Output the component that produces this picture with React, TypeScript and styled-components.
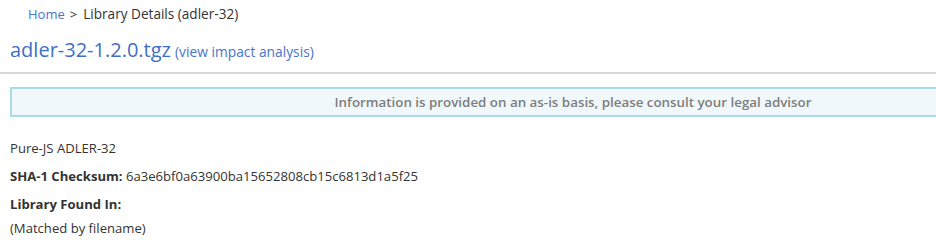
import React from "react";
import styled, { createGlobalStyle } from "styled-components";

const Global = createGlobalStyle`
  html, body { margin: 0; padding: 0; background: #fff; overflow: hidden; }
  body { font-family: "Open Sans", "Liberation Sans", sans-serif; color: #333; font-size: 13px; }
`;

const Page = styled.div`
  width: 936px;
  overflow: hidden;
`;

const Breadcrumb = styled.nav`
  padding: 5px 0 0 28px;
  height: 22px;
  line-height: 18px;
  font-size: 13px;
  color: #333;
`;

const Crumb = styled.a`
  color: #4a74c9;
  text-decoration: none;
`;

const Sep = styled.span`
  margin: 0 6px 0 5px;
`;

const Current = styled.span`
  font-size: 13.6px;
`;

const Header = styled.div`
  padding: 10px 10px 0;
  height: 47px;
  box-sizing: border-box;
  border-bottom: 2px solid #d6d6d6;
`;

const Title = styled.h1`
  margin: 0;
  font-size: 20px;
  font-weight: 400;
  line-height: 26px;
  color: #3f6fc6;
`;

const SubLink = styled.a`
  font-size: 13.8px;
  color: #4a74c9;
  text-decoration: none;
  margin-left: 4px;
`;

const Notice = styled.div`
  margin: 13px 0 0 10px;
  width: 1124px;
  height: 30px;
  box-sizing: border-box;
  background: #f1f8fb;
  border: 2px solid #a9dbe6;
  border-right: none;
  display: flex;
  align-items: center;
  justify-content: center;
  color: #7d7d7d;
  font-weight: 600;
  font-size: 13.35px;
`;

const Details = styled.div`
  padding: 22px 10px 0;
  display: flex;
  flex-direction: column;
  font-size: 13.1px;
`;

const Row = styled.div<{ $gap?: number }>`
  line-height: 18px;
  margin-top: ${(p) => p.$gap ?? 0}px;
`;

const Label = styled.b`
  font-weight: 700;
`;

export default function App() {
  return (
    <Page>
      <Global />
      <Breadcrumb>
        <Crumb href="#">Home</Crumb>
        <Sep>&gt;</Sep>
        <Current>Library Details (adler-32)</Current>
      </Breadcrumb>
      <Header>
        <Title>
          adler-32-1.2.0.tgz
          <SubLink href="#">(view impact analysis)</SubLink>
        </Title>
      </Header>
      <Notice>Information is provided on an as-is basis, please consult your legal advisor</Notice>
      <Details>
        <Row>Pure-JS ADLER-32</Row>
        <Row $gap={10}>
          <Label>SHA-1 Checksum:</Label> 6a3e6bf0a63900ba15652808cb15c6813d1a5f25
        </Row>
        <Row $gap={10}>
          <Label>Library Found In:</Label>
        </Row>
        <Row $gap={6}>(Matched by filename)</Row>
      </Details>
    </Page>
  );
}
